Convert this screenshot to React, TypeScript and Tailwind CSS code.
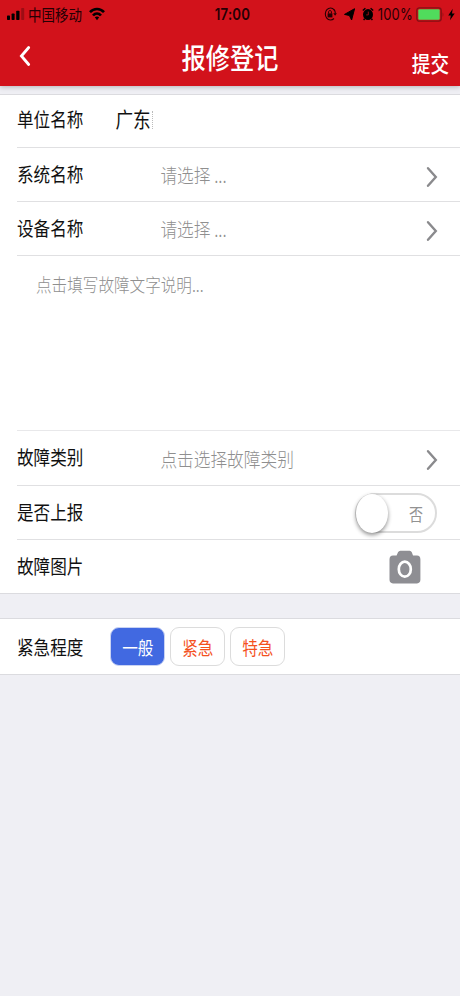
import React from 'react';
import clsx from 'clsx';

interface TextProps {
  children: React.ReactNode;
  className?: string;
}

// Tall, narrow lettering used across the whole screen
const Text: React.FC<TextProps> = ({ children, className = '' }) => (
  <span className={clsx('block whitespace-pre leading-none scale-y-[1.19]', className)}>{children}</span>
);

interface RowProps {
  label: string;
  className?: string;
  children?: React.ReactNode;
}

const Row: React.FC<RowProps> = ({ label, className = '', children }) => (
  <div className={clsx('ml-[17px] flex items-center border-[#e0e0e2]', className)}>
    <Text className="text-[16.6px]">{label}</Text>
    {children}
  </div>
);

const ChevronRight = () => (
  <svg width="12" height="22" viewBox="0 0 12 22" className="mr-[22px] mt-[5px] ml-auto" fill="none">
    <path d="M2 2.2 9.8 11 2 19.8" stroke="#8a8a8d" strokeWidth="2.4" strokeLinecap="round" />
  </svg>
);

const Placeholder: React.FC<{ children: string }> = ({ children }) => (
  <Text className="ml-[77px] mt-[3px] text-[16.7px] font-light text-[#8f8f8f]">{children}</Text>
);

const StatusBar = () => (
  <div className="relative flex h-[29px] items-center text-black">
    <svg width="18" height="13" viewBox="0 0 18 13" className="ml-[7px]">
      <rect x="0" y="7.5" width="3" height="4.5" rx="0.7" />
      <rect x="4.6" y="5.5" width="3" height="6.5" rx="0.7" />
      <rect x="9.2" y="2.8" width="3.3" height="9.2" rx="0.7" />
      <rect x="14.2" y="0" width="3" height="12" rx="0.7" opacity="0.25" />
    </svg>
    <Text className="ml-[3px] text-[13.5px] text-[#250004]">中国移动</Text>
    <svg width="16" height="14" viewBox="0 0 16 14" className="mb-[2px] ml-[7px]" fill="none" stroke="black" strokeWidth="2.6">
      <path d="M1 5.2C4.8 .9 11.2 .9 15 5.2" />
      <path d="M4 8.5c2.3-2.7 5.7-2.7 8 0" />
      <path d="M5.8 10.3c1.2-1.2 3.2-1.2 4.4 0L8 13.2Z" fill="black" stroke="none" />
    </svg>
    <div className="absolute inset-x-0 top-0 flex h-[29px] items-center justify-center pl-[5px]">
      <Text className="font-[Inter] text-[13.2px] font-semibold tracking-[0.2px] text-[#250004]">17:00</Text>
    </div>
    <div className="mb-px ml-auto flex items-center pr-[5px]">
      {/* rotation lock */}
      <svg width="13" height="14" viewBox="0 0 13 14" fill="none" stroke="#250004">
        <path d="M10.2 2.8A5.2 6 0 1 0 10 11.5" strokeWidth="1.1" />
        <path d="M9.9 2.5c1 1 1.4 2.3 1.5 4" strokeWidth="1.1" />
        <path d="M9.3 6.2h3.6l-1.8 2.6Z" fill="#250004" stroke="none" />
        <rect x="3.6" y="6.4" width="4.8" height="4" fill="#250004" stroke="none" />
        <path d="M4.6 6.5V5c0-2 2.8-2 2.8 0v1.5" strokeWidth="1" />
      </svg>
      <svg width="11" height="13" viewBox="0 0 11 13" className="ml-[7px]">
        <path d="M10.6 .7 7.6 12 5.4 7.5 .5 6.4Z" stroke="black" strokeWidth="1" strokeLinejoin="round" />
      </svg>
      {/* alarm */}
      <svg width="12" height="14" viewBox="0 0 12 14" className="ml-[7px]">
        <ellipse cx="6" cy="7.6" rx="5" ry="5.5" />
        <path d="M.8 3.6 3.4 1.2M11.2 3.6 8.6 1.2M2.6 11.8 1.6 13M9.4 11.8l1 1.2" stroke="black" strokeWidth="1.4" />
        <path d="M6.3 4.6v3.3H4.2" fill="none" stroke="#a50d14" strokeWidth="0.9" />
      </svg>
      <Text className="ml-[4px] font-[Inter] text-[13px] tracking-[0.2px] text-[#250004]">100%</Text>
      <svg width="28" height="15" viewBox="0 0 28 15" className="ml-[3px]">
        <rect x="0.8" y="0.8" width="24.4" height="13.4" rx="2.6" fill="none" stroke="#851015" strokeWidth="1.3" />
        <rect x="2.3" y="2.2" width="21.4" height="10.6" rx="1.2" fill="#50dc5c" />
        <path d="M26.6 5.2c1 .7 1 3.9 0 4.6Z" fill="#851015" />
      </svg>
      <svg width="7" height="13" viewBox="0 0 7 13" className="ml-[4px]">
        <path d="M4.7 .8 .2 7.4h2.6L2 12.2l4.7-6.8H4Z" />
      </svg>
    </div>
  </div>
);

const levels = ['一般', '紧急', '特急'];

export default function App() {
  return (
    <div className="h-[996px] w-[460px] overflow-hidden bg-[#efeff4] font-['Noto_Sans_CJK_SC',sans-serif] text-[#111]">
      <header className="relative z-10 h-[86px] bg-[#d2121b] shadow-[0_1px_5px_rgba(0,0,0,0.25)]">
        <StatusBar />
        <div className="relative flex h-[57px] items-center text-white">
          <svg width="12" height="22" viewBox="0 0 12 22" className="mb-[3px] ml-[19px]" fill="none">
            <path d="M9.7 2.5 2.4 11 9.7 19.5" stroke="white" strokeWidth="2.8" strokeLinecap="round" />
          </svg>
          <div className="absolute inset-0 flex items-center justify-center">
            <Text className="text-[24.2px] font-medium">报修登记</Text>
          </div>
          <Text className="relative mr-[11px] mt-[12px] ml-auto text-[18.6px] font-medium">提交</Text>
        </div>
      </header>

      <section className="mt-[8px] border-y border-[#dbdbdf] bg-white">
        <Row label="单位名称" className="h-[53px] border-b pb-[3px]">
          <Text className="mb-[2px] ml-[32px] text-[17.6px]">广东</Text>
          <span className="ml-px h-[18px] border-l border-dotted border-[#bbb]" />
        </Row>
        <Row label="系统名称" className="h-[54px] border-b pb-px">
          <Placeholder>请选择 ...</Placeholder>
          <ChevronRight />
        </Row>
        <Row label="设备名称" className="h-[54px] border-b pb-px">
          <Placeholder>请选择 ...</Placeholder>
          <ChevronRight />
        </Row>
        <div className="ml-[17px] h-[175px] border-b border-[#e8e8ea] pt-[21px] pl-[19px]">
          <Text className="text-[15.6px] font-light text-[#8f8f8f]">点击填写故障文字说明...</Text>
        </div>
        <Row label="故障类别" className="h-[55px] border-b pb-px">
          <Placeholder>点击选择故障类别</Placeholder>
          <ChevronRight />
        </Row>
        <Row label="是否上报" className="h-[54px] border-b">
          <div className="relative mr-[23px] ml-auto flex h-[40px] w-[82px] items-center justify-end rounded-full border-2 border-[#dcdcdc] pr-[12px]">
            <div className="absolute -top-px -left-px h-[39px] w-[32px] rounded-[50%] bg-white shadow-[0_2px_4px_rgba(0,0,0,0.45)]" />
            <Text className="mt-[3px] text-[14px] text-[#929292]">否</Text>
          </div>
        </Row>
        <Row label="故障图片" className="h-[53px]">
          <svg width="32" height="34" viewBox="0 0 32 34" className="mr-[39px] ml-auto" fill="none">
            <path
              d="M4 5.6h3.6l1.4-3.4Q9.8.7 11.4.7h9.2q1.6 0 2.2 1.5l1.2 3.4h4q3.4 0 3.4 3.8v20.2q0 3.8-3.4 3.8H4Q.5 33.4.5 29.6V9.4Q.5 5.6 4 5.6Z"
              fill="#8e8e93"
            />
            <ellipse cx="15.8" cy="19.2" rx="6" ry="7.5" stroke="white" strokeWidth="2.7" />
          </svg>
        </Row>
      </section>

      <section className="mt-[24px] border-y border-[#dbdbdf] bg-white">
        <Row label="紧急程度" className="h-[55px] pt-[2px]">
          <div className="mb-[2px] ml-[27px] flex gap-[5px]">
            {levels.map((level, i) => (
              <button
                key={level}
                className={clsx(
                  'flex h-[39px] w-[55px] items-center justify-center rounded-[9px] border pt-[3px]',
                  i === 0 ? 'border-[#c9d3f3] bg-[#4169e1] text-white' : 'border-[#dcdcdc] bg-white text-[#f4511e]'
                )}
              >
                <Text className="text-[15.6px]">{level}</Text>
              </button>
            ))}
          </div>
        </Row>
      </section>
    </div>
  );
}
